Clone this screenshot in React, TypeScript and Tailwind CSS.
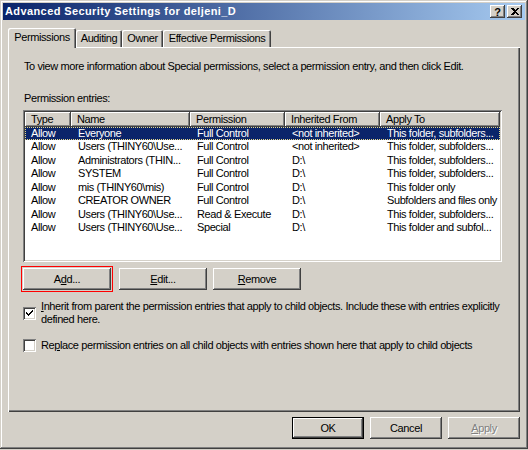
import React from "react";

type Entry = { type: string; name: string; perm: string; from: string; apply: string };

const entries: Entry[] = [
  { type: "Allow", name: "Everyone", perm: "Full Control", from: "<not inherited>", apply: "This folder, subfolders..." },
  { type: "Allow", name: "Users (THINY60\\Use...", perm: "Full Control", from: "<not inherited>", apply: "This folder, subfolders..." },
  { type: "Allow", name: "Administrators (THIN...", perm: "Full Control", from: "D:\\", apply: "This folder, subfolders..." },
  { type: "Allow", name: "SYSTEM", perm: "Full Control", from: "D:\\", apply: "This folder, subfolders..." },
  { type: "Allow", name: "mis (THINY60\\mis)", perm: "Full Control", from: "D:\\", apply: "This folder only" },
  { type: "Allow", name: "CREATOR OWNER", perm: "Full Control", from: "D:\\", apply: "Subfolders and files only" },
  { type: "Allow", name: "Users (THINY60\\Use...", perm: "Read & Execute", from: "D:\\", apply: "This folder, subfolders..." },
  { type: "Allow", name: "Users (THINY60\\Use...", perm: "Special", from: "D:\\", apply: "This folder and subfol..." },
];

const cols = [
  { label: "Type", w: "w-[46px]" },
  { label: "Name", w: "w-[119px]" },
  { label: "Permission", w: "w-[95px]" },
  { label: "Inherited From", w: "w-[95px]" },
  { label: "Apply To", w: "w-[120px]" },
];

const raised =
  "shadow-[inset_-1px_-1px_#404040,inset_1px_1px_#ffffff,inset_-2px_-2px_#808080,inset_2px_2px_#d4d0c8]";
const sunken =
  "shadow-[inset_1px_1px_#808080,inset_-1px_-1px_#ffffff,inset_2px_2px_#404040,inset_-2px_-2px_#d4d0c8]";

function Button({ children, className = "" }: { children: React.ReactNode; className?: string }) {
  return (
    <div className={`flex items-center justify-center h-[22px] bg-[#d4d0c8] ${raised} ${className}`}>
      {children}
    </div>
  );
}

function Checkbox({ checked }: { checked?: boolean }) {
  return (
    <div className={`w-[13px] h-[13px] shrink-0 bg-white ${sunken} flex items-center justify-center`}>
      {checked && (
        <svg width="13" height="13" viewBox="0 0 13 13">
          <path d="M3 5 L3 7 L5 9 L10 4 L10 2 L5 7 Z" fill="#000" shapeRendering="crispEdges" />
        </svg>
      )}
    </div>
  );
}

export default function App() {
  return (
    <div className="w-[528px] h-[450px] bg-[#d4d0c8] overflow-hidden font-['Liberation_Sans',Arial,sans-serif] text-[11px] tracking-[-0.4px] text-black">
      <div className="w-[528px] h-[449px] p-[3px] shadow-[inset_-1px_-1px_#404040,inset_1px_1px_#d4d0c8,inset_-2px_-2px_#808080,inset_2px_2px_#ffffff]">
        {/* title bar */}
        <div className="h-[17px] flex items-center justify-between pl-[2px] pr-[3px] bg-[linear-gradient(to_right,#0a246a,#a6caf0)]">
          <span className="text-white font-bold tracking-[0.4px] leading-none">Advanced Security Settings for deljeni_D</span>
          <div className="flex gap-[2px]">
            <div className={`w-[15px] h-[13px] bg-[#d4d0c8] ${raised} flex items-center justify-center font-bold text-[11px] leading-none pt-px`}>
              ?
            </div>
            <div className={`w-[15px] h-[13px] bg-[#d4d0c8] ${raised} flex items-center justify-center`}>
              <svg width="8" height="7" viewBox="0 0 8 7">
                <path d="M0 0h2l2 2 2-2h2L5 3.5 8 7H6L4 5 2 7H0l3-3.5Z" fill="#000" shapeRendering="crispEdges" />
              </svg>
            </div>
          </div>
        </div>

        <div className="px-[5px]">
          {/* tabs */}
          <div className="flex items-end h-[20px] mt-[8px] relative z-10">
            <div className="w-[68px] h-[20px] pb-[2px] flex items-center justify-center bg-[#d4d0c8] rounded-t-[2px] shadow-[inset_1px_1px_#ffffff,inset_-1px_0_#404040,inset_-2px_0_#808080]">
              Permissions
            </div>
            <div className="w-[46px] h-[17px] mb-px flex items-center justify-center rounded-t-[2px] shadow-[inset_1px_1px_#ffffff,inset_-1px_0_#404040,inset_-2px_0_#808080]">
              Auditing
            </div>
            <div className="w-[41px] h-[17px] mb-px flex items-center justify-center rounded-t-[2px] shadow-[inset_1px_1px_#ffffff,inset_-1px_0_#404040,inset_-2px_0_#808080]">
              Owner
            </div>
            <div className="w-[108px] h-[17px] mb-px flex items-center justify-center rounded-t-[2px] shadow-[inset_1px_1px_#ffffff,inset_-1px_0_#404040,inset_-2px_0_#808080]">
              Effective Permissions
            </div>
          </div>

          {/* tab page */}
          <div className="-mt-px w-[512px] h-[365px] pl-[15px] flex flex-col shadow-[inset_1px_1px_#ffffff,inset_-1px_-1px_#404040,inset_-2px_-2px_#808080]">
            <div className="mt-[12px] h-[14px] leading-[14px] pl-px">
              To view more information about Special permissions, select a permission entry, and then click Edit.
            </div>
            <div className="mt-[18px] h-[14px] leading-[14px] pl-px">Permission entries:</div>

            {/* list view */}
            <div className={`mt-[5px] w-[479px] h-[152px] bg-white p-[2px] ${sunken}`}>
              <div className="flex h-[15px]">
                {cols.map((c) => (
                  <div
                    key={c.label}
                    className={`${c.w} h-[15px] leading-[15px] pl-[6px] bg-[#d4d0c8] shadow-[inset_-1px_-1px_#404040,inset_1px_1px_#ffffff,inset_-2px_-2px_#808080]`}
                  >
                    {c.label}
                  </div>
                ))}
              </div>
              {entries.map((e, i) => {
                const sel = i === 0;
                return (
                  <div
                    key={i}
                    className={`flex h-[13.43px] leading-[13px] whitespace-nowrap ${
                      sel ? "bg-[#0a246a] text-white outline outline-dotted -outline-offset-1 outline-[#e6d98a]" : ""
                    }`}
                  >
                    <div className="w-[46px] pl-[6px]">{e.type}</div>
                    <div className="w-[119px] pl-[7px]">{e.name}</div>
                    <div className="w-[95px] pl-[7px]">{e.perm}</div>
                    <div className="w-[95px] pl-[7px]">{e.from}</div>
                    <div className="w-[120px] pl-[7px]">{e.apply}</div>
                  </div>
                );
              })}
            </div>

            {/* add / edit / remove */}
            <div className="flex mt-[6px]">
              <Button className="w-[88px] outline outline-offset-1 outline-[#ff0000]">
                <span>
                  A<span className="underline">d</span>d...
                </span>
              </Button>
              <Button className="w-[88px] ml-[8px]">
                <span>
                  <span className="underline">E</span>dit...
                </span>
              </Button>
              <Button className="w-[88px] ml-[6px]">
                <span>
                  <span className="underline">R</span>emove
                </span>
              </Button>
            </div>

            {/* options */}
            <div className="flex mt-[10px]">
              <div className="mt-[7px]">
                <Checkbox checked />
              </div>
              <div className="ml-[5px] leading-[13px]">
                <span className="underline">I</span>nherit from parent the permission entries that apply to child objects. Include these with entries explicitly
                <br />
                defined here.
              </div>
            </div>
            <div className="flex mt-[12px]">
              <div className="mt-px">
                <Checkbox />
              </div>
              <div className="ml-[5px] leading-[14px]">
                Re<span className="underline">p</span>lace permission entries on all child objects with entries shown here that apply to child objects
              </div>
            </div>
          </div>

          {/* dialog buttons */}
          <div className="flex justify-end gap-[6px] mt-[5px] w-[512px]">
            <div className="w-[72px] h-[22px] border border-black">
              <div className={`w-full h-full flex items-center justify-center ${raised}`}>OK</div>
            </div>
            <Button className="w-[72px]">Cancel</Button>
            <Button className="w-[72px]">
              <span className="text-[#808080] [text-shadow:1px_1px_0_#ffffff]">
                <span className="underline">A</span>pply
              </span>
            </Button>
          </div>
        </div>
      </div>
    </div>
  );
}
